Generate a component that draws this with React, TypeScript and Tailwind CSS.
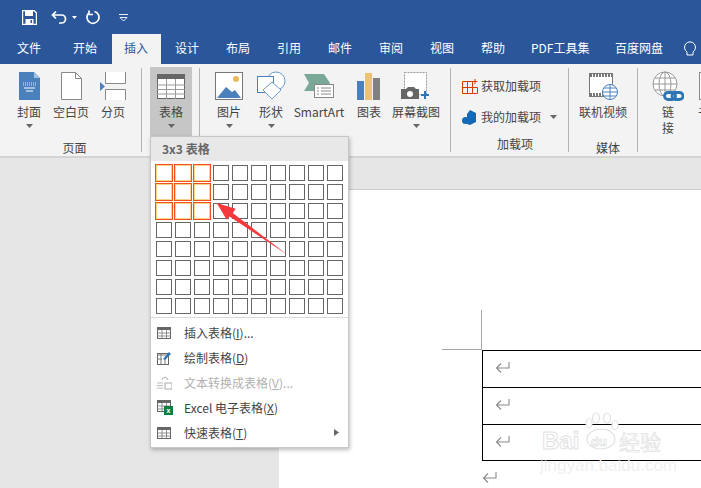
import type { ReactNode } from "react"

const cjk = { fontFamily: '"Noto Sans CJK SC", "Noto Sans", sans-serif' }

const tabs = [
  { label: "文件", w: "w-[58px]", pl: "pl-[17px]" },
  { label: "开始", w: "w-[54px]", pl: "pl-[15px]" },
  { label: "插入", w: "w-[49px]", pl: "pl-[12px]", active: true },
  { label: "设计", w: "w-[51px]", pl: "pl-[14px]" },
  { label: "布局", w: "w-[51px]", pl: "pl-[14px]" },
  { label: "引用", w: "w-[51px]", pl: "pl-[14px]" },
  { label: "邮件", w: "w-[51px]", pl: "pl-[14px]" },
  { label: "审阅", w: "w-[51px]", pl: "pl-[14px]" },
  { label: "视图", w: "w-[51px]", pl: "pl-[14px]" },
  { label: "帮助", w: "w-[51px]", pl: "pl-[14px]" },
  { label: "PDF工具集", w: "w-[85px]", pl: "pl-[13px]" },
  { label: "百度网盘", w: "w-[78px]", pl: "pl-[12px]" },
]

function Caret({ className = "" }: { className?: string }) {
  return (
    <svg width="7" height="4" viewBox="0 0 7 4" className={className}>
      <path d="M0 0h7L3.500 4z" fill="#666" />
    </svg>
  )
}

function RibbonButton({ w, icon, label, caret, active }: { w: string; icon: ReactNode; label: ReactNode; caret?: boolean; active?: boolean }) {
  return (
    <div className={`${w} flex shrink-0 flex-col items-center ${active ? "-mt-[1px] h-[71px] bg-[#c6c6c6] pt-[1px]" : "h-[70px]"}`}>
      <div className="mt-[3px] flex h-[30px] items-center justify-center">{icon}</div>
      <div className="mt-[3px] text-center text-[12px] leading-[16px] whitespace-nowrap text-[#444]">{label}</div>
      {caret && <Caret className="mt-[4px]" />}
    </div>
  )
}

function Group({ w, pl, label, children }: { w: string; pl: string; label?: string; children: ReactNode }) {
  return (
    <div className={`${w} flex h-full shrink-0 flex-col border-r border-[#b4b4b4] ${pl}`}>
      <div className="flex h-[70px]">{children}</div>
      <div className="mt-[2px] text-center text-[12px] leading-[16px] text-[#444]">{label}</div>
    </div>
  )
}

function TableIcon({ size = 14 }: { size?: number }) {
  return (
    <svg width={size} height={(size * 12) / 14} viewBox="0 0 14 12">
      <rect x="0.500" y="0.500" width="13" height="11" fill="#fff" stroke="#666" />
      <rect x="0" y="0" width="14" height="3" fill="#666" />
      <path d="M0.500 6h13M0.500 9h13M5 3v8M9.500 3v8" stroke="#777" strokeWidth="0.800" />
    </svg>
  )
}

function MenuItem({ icon, children, disabled, arrow }: { icon: ReactNode; children: ReactNode; disabled?: boolean; arrow?: boolean }) {
  return (
    <div className={`flex h-[25px] items-center text-[12px] ${disabled ? "text-[#b1b1b1]" : "text-[#444]"}`}>
      <div className="flex w-[33px] justify-start pl-[6px]">{icon}</div>
      <span>{children}</span>
      {arrow && (
        <svg width="5" height="7" viewBox="0 0 5 7" className="mr-[9px] ml-auto">
          <path d="M0 0l5 3.500L0 7z" fill="#666" />
        </svg>
      )}
    </div>
  )
}

function Key({ k }: { k: string }) {
  return (
    <>
      (<span className="underline">{k}</span>)
    </>
  )
}

function ReturnMark() {
  return (
    <svg width="15" height="13" viewBox="0 0 15 13">
      <path d="M14 1v6H1.500M6 2.500L1.500 7 6 11.500" fill="none" stroke="#8a8a8a" strokeWidth="1.100" />
    </svg>
  )
}

export default function App() {
  const cells = Array.from({ length: 80 }, (_, i) => i)

  return (
    <div className="relative flex h-[488px] w-[701px] flex-col overflow-hidden bg-[#e6e6e6]" style={cjk}>
      {/* title bar */}
      <div className="flex h-[34px] shrink-0 items-center bg-[#2b579a] pt-[1px] pl-[22px]">
        <svg width="15" height="15" viewBox="0 0 15 15">
          <path d="M0.500 0.500h11.500l2.500 2.500v11.500H0.500z" fill="none" stroke="#fff" strokeWidth="1.400" />
          <rect x="3" y="1" width="8" height="5" fill="#fff" />
          <rect x="3.500" y="9" width="8" height="5" fill="#fff" />
          <rect x="8.500" y="10" width="1.500" height="3" fill="#2b579a" />
        </svg>
        <svg width="17" height="15" viewBox="0 0 17 15" className="ml-[14px]">
          <path d="M5 1.500L1.500 5 5 8.500M2 5h8.500a4 4 0 0 1 0 8H8" fill="none" stroke="#fff" strokeWidth="1.700" />
        </svg>
        <svg width="5" height="3" viewBox="0 0 5 3" className="ml-[4px]">
          <path d="M0 0h5L2.500 3z" fill="#fff" />
        </svg>
        <svg width="15" height="15" viewBox="0 0 15 15" className="ml-[8px]">
          <path d="M9.500 1.500a6 6 0 1 1-6 1.800M4 0.500v4h4" fill="none" stroke="#fff" strokeWidth="1.700" />
        </svg>
        <svg width="9" height="8" viewBox="0 0 9 8" className="ml-[19px]">
          <path d="M0 0.500h9M1 3.500h7L4.500 7z" fill="none" stroke="#fff" strokeWidth="0.900" />
        </svg>
      </div>

      {/* tabs */}
      <div className="flex h-[30px] shrink-0 items-center bg-[#2b579a] text-[12px] text-white">
        {tabs.map((t) => (
          <div key={t.label} className={`${t.w} ${t.pl} flex h-full items-center pb-[2px] ${t.active ? "bg-[#f3f3f3] text-[#2b579a]" : ""}`}>
            {t.label}
          </div>
        ))}
        <svg width="13" height="17" viewBox="0 0 13 17" className="mb-[2px] ml-[2px]">
          <path d="M4 12a5.500 5.500 0 1 1 6 0v3H4z" fill="none" stroke="#fff" />
        </svg>
      </div>

      {/* ribbon */}
      <div className="flex h-[94px] shrink-0 overflow-hidden border-b-2 border-[#d4d4d4] bg-[#f3f3f3] py-[4px]">
        <Group w="w-[142px]" pl="pl-[8px]" label="页面">
          <RibbonButton
            w="w-[42px]"
            label="封面"
            caret
            icon={
              <svg width="21" height="28" viewBox="0 0 21 28">
                <path d="M0 0h15l6 6v22H0z" fill="#4a80bb" />
                <path d="M15 0l6 6h-6z" fill="#a5c3e0" />
                <path d="M4 11h13M4 13h13" stroke="#dfe9f4" strokeDasharray="1 1" />
                <path d="M5 16h11M7 19h7" stroke="#fff" />
              </svg>
            }
          />
          <RibbonButton
            w="w-[42px]"
            label="空白页"
            icon={
              <svg width="21" height="28" viewBox="0 0 21 28">
                <path d="M0.500 0.500h14l6 6v21H0.500z" fill="#fff" stroke="#888" />
                <path d="M14.500 0.500v6h6" fill="none" stroke="#888" />
              </svg>
            }
          />
          <RibbonButton
            w="w-[42px]"
            label="分页"
            icon={
              <svg width="26" height="28" viewBox="0 0 26 28">
                <path d="M5.500 0v11.500h20V0M5.500 28V17.500h20V28" fill="#fff" stroke="#888" />
                <path d="M0 10l5 4.500L0 19z" fill="#4a80bb" />
              </svg>
            }
          />
        </Group>

        <Group w="w-[58px]" pl="pl-[8px]">
          <RibbonButton
            w="w-[42px]"
            label="表格"
            caret
            active
            icon={
              <svg width="28" height="25" viewBox="0 0 28 25">
                <rect x="0.500" y="0.500" width="27" height="24" fill="#fff" stroke="#666" />
                <rect width="28" height="5" fill="#666" />
                <path d="M0 11h28M0 15.500h28M0 20h28M9.500 5v20M18.500 5v20" stroke="#999" />
              </svg>
            }
          />
        </Group>

        <Group w="w-[251px]" pl="pl-[8px]">
          <RibbonButton
            w="w-[42px]"
            label="图片"
            caret
            icon={
              <svg width="28" height="28" viewBox="0 0 28 28">
                <rect x="0.500" y="0.500" width="27" height="27" fill="#fff" stroke="#777" />
                <circle cx="21" cy="7" r="3" fill="#eab95e" />
                <path d="M2 26l9-11 6 5 3-2 6 8z" fill="#4a80bb" />
              </svg>
            }
          />
          <RibbonButton
            w="w-[42px]"
            label="形状"
            caret
            icon={
              <svg width="30" height="30" viewBox="0 0 30 30">
                <circle cx="20" cy="10" r="9" fill="#fff" stroke="#6a9bcc" />
                <rect x="1.500" y="5.500" width="16" height="16" fill="#fff" stroke="#4a80bb" />
                <path d="M16 11l9 8-9 9-9-9z" fill="#fff" stroke="#6a9bcc" />
              </svg>
            }
          />
          <RibbonButton
            w="w-[54px]"
            label="SmartArt"
            icon={
              <svg width="30" height="24" viewBox="0 0 30 24">
                <path d="M0 0h20l6 9-6 8H0l5-8z" fill="#7aa896" />
                <rect x="10.500" y="10.500" width="19" height="13" fill="#fff" stroke="#888" />
                <path d="M13 14h2M17 14h10M13 17h2M17 17h10M13 20h2M17 20h10" stroke="#888" />
              </svg>
            }
          />
          <RibbonButton
            w="w-[46px]"
            label="图表"
            icon={
              <svg width="24" height="27" viewBox="0 0 24 27">
                <rect x="0" y="8" width="7" height="19" fill="#4a80bb" />
                <rect x="8" y="0" width="7" height="27" fill="#eec178" />
                <rect x="16" y="5" width="7" height="22" fill="#808080" />
              </svg>
            }
          />
          <RibbonButton
            w="w-[48px]"
            label="屏幕截图"
            caret
            icon={
              <svg width="30" height="28" viewBox="0 0 30 28">
                <rect x="3.500" y="0.500" width="22" height="22" fill="#fff" stroke="#999" strokeDasharray="2 1" />
                <path d="M0 17h5l2-2h6l2 2h3v10H0z" fill="#666" />
                <circle cx="9" cy="22" r="3" fill="#fff" />
                <path d="M24 19v8M20 23h8" stroke="#2e75b6" strokeWidth="2" />
              </svg>
            }
          />
        </Group>

        <Group w="w-[118px]" pl="pl-[11px]" label="加载项">
          <div className="flex flex-col text-[12px] text-[#444]">
            <div className="mt-[8px] flex h-[20px] items-center gap-[3px]">
              <svg width="16" height="15" viewBox="0 0 16 15">
                <path d="M0.500 2.500h10v12H0.500zM0.500 8.500h15v6h-5M5.500 2.500v12M13 0v5M10.500 2.500h5" fill="none" stroke="#d83b01" />
              </svg>
              获取加载项
            </div>
            <div className="mt-[11px] flex h-[20px] items-center gap-[3px]">
              <svg width="15" height="15" viewBox="0 0 15 15" className="mr-[1px]">
                <path d="M8 0l6 3v9l-6 3-3-1V4z" fill="#1269b8" />
                <circle cx="3.500" cy="10.500" r="3.500" fill="#1269b8" />
              </svg>
              <span>我的加载项</span>
              <Caret className="ml-[6px]" />
            </div>
          </div>
        </Group>

        <Group w="w-[69px]" pl="pl-[10px]" label="媒体">
          <RibbonButton
            w="w-[48px]"
            label="联机视频"
            icon={
              <svg width="29" height="27" viewBox="0 0 29 27">
                <rect x="0.500" y="0.500" width="23" height="23" fill="#fff" stroke="#777" />
                <path d="M1 2.500h22M1 21.500h22" stroke="#777" strokeWidth="3" strokeDasharray="2 1" />
                <circle cx="21" cy="19" r="7.500" fill="#fff" stroke="#4a80bb" />
                <path d="M13.500 19h15M21 11.500v15M15 15h12M15 23h12" stroke="#4a80bb" />
              </svg>
            }
          />
        </Group>

        <div className="flex pl-[9px]">
          <RibbonButton
            w="w-[42px]"
            label={
              <>
                链
                <br />接
              </>
            }
            icon={
              <svg width="32" height="31" viewBox="0 0 32 31">
                <circle cx="13" cy="13" r="12" fill="#fff" stroke="#999" />
                <path d="M1 13h24M13 1v24M3 7h20M3 19h20" stroke="#999" />
                <ellipse cx="13" cy="13" rx="6" ry="12" fill="none" stroke="#999" />
                <rect x="12.500" y="21.500" width="11" height="7" rx="3.500" fill="#f3f3f3" stroke="#2e75b6" strokeWidth="2.800" />
                <rect x="20" y="21.500" width="11" height="7" rx="3.500" fill="none" stroke="#2e75b6" strokeWidth="2.800" />
              </svg>
            }
          />
          <RibbonButton
            w="w-[42px]"
            label="书签"
            icon={
              <svg width="22" height="28" viewBox="0 0 22 28">
                <rect x="0.500" y="0.500" width="21" height="27" fill="#fff" stroke="#888" />
              </svg>
            }
          />
        </div>
      </div>

      {/* document canvas */}
      <div className="flex-1 pt-[31px] pl-[279px]">
        <div className="h-full border-t border-[#cdcdcd] bg-white pt-[160px] pl-[203px]">
          <div className="relative">
            <div className="absolute top-[-40px] left-[-1px] h-[40px] w-px bg-[#a6a6a6]" />
            <div className="absolute top-[-1px] left-[-40px] h-px w-[40px] bg-[#a6a6a6]" />
            {[0, 1, 2].map((r) => (
              <div key={r} className={`flex h-[37px] items-center border-t border-l border-black pb-[3px] pl-[12px] ${r === 2 ? "border-b" : ""}`}>
                <ReturnMark />
              </div>
            ))}
            <div className="mt-[10px]">
              <ReturnMark />
            </div>

            {/* baidu watermark */}
            <div className="absolute top-[66px] left-[58px] flex w-[126px] flex-col">
              <svg width="40" height="38" viewBox="0 0 40 38" className="absolute top-[-4px] left-[42px]">
                <g fill="#fff" stroke="#e2e2e2" strokeWidth="1.200">
                  <ellipse cx="7" cy="11" rx="3" ry="4.500" />
                  <ellipse cx="14" cy="6" rx="3.500" ry="5" />
                  <ellipse cx="25" cy="6" rx="3.500" ry="5" />
                  <ellipse cx="33" cy="13" rx="3" ry="4.500" />
                  <ellipse cx="19" cy="27" rx="14" ry="10" />
                </g>
              </svg>
              <div className="relative mt-[15px] flex h-[20px] items-center leading-none text-white">
                <span className="w-[43px] pl-[2px] text-[24px] font-bold [-webkit-text-stroke:1px_#e2e2e2]" style={{ fontFamily: '"Liberation Sans", sans-serif' }}>Bai</span>
                <span className="w-[34px] pl-[8px] text-[13px] font-bold [-webkit-text-stroke:0.700px_#dcdcdc]" style={{ fontFamily: '"Liberation Sans", sans-serif' }}>du</span>
                <span className="ml-[2px] text-[21px] whitespace-nowrap [-webkit-text-stroke:0.700px_#e0e0e0]">经验</span>
              </div>
              <div className="mt-[7px] text-[17px] leading-[16px] whitespace-nowrap text-[#f0f0f0]" style={{ fontFamily: '"Liberation Sans", sans-serif' }}>jingyan.baidu.com</div>
            </div>
          </div>
        </div>
      </div>

      {/* table dropdown */}
      <div className="absolute top-[136px] left-[150px] w-[199px] border border-[#c6c6c6] bg-white shadow-[1px_2px_4px_rgba(0,0,0,0.25)]">
        <div className="flex h-[24px] items-center bg-[#e8e8e8] pl-[11px] text-[12px] font-bold text-[#666]">3x3 表格</div>
        <div className="grid grid-cols-[repeat(10,19px)] grid-rows-[repeat(8,19px)] pt-[2px] pl-[3px]">
          {cells.map((i) => {
            const selected = i % 10 < 3 && i < 30
            return (
              <div key={i} className="flex items-center justify-center">
                {selected ? (
                  <div className="h-[18px] w-[18px] border border-[#f0501e] bg-white shadow-[inset_0_0_0_1px_#fbd38a]" />
                ) : (
                  <div className="h-[16px] w-[16px] border border-[#666] bg-white" />
                )}
              </div>
            )
          })}
        </div>
        <div className="mt-[2px] border-t border-[#d8d8d8]" />
        <div className="pt-[2px] pb-[2px]">
          <MenuItem icon={<TableIcon />}>
            插入表格
            <Key k="I" />
            ...
          </MenuItem>
          <MenuItem
            icon={
              <svg width="15" height="15" viewBox="0 0 15 15">
                <rect x="0.500" y="3.500" width="11" height="11" fill="#fff" stroke="#666" />
                <path d="M0 5h12M4 4v10M8 9v5M0 9h5" stroke="#777" />
                <path d="M6 9l6-7 2 2-6 6z" fill="#2e75b6" />
              </svg>
            }
          >
            绘制表格
            <Key k="D" />
          </MenuItem>
          <MenuItem
            disabled
            icon={
              <svg width="15" height="15" viewBox="0 0 15 15">
                <path d="M0 8h6M0 10.500h6M0 13h6" stroke="#bbb" />
                <rect x="8" y="8" width="7" height="6" fill="#fff" stroke="#aaa" />
                <path d="M5 5a3 3 0 0 1 5-2l1 2" fill="none" stroke="#aaa" />
              </svg>
            }
          >
            文本转换成表格
            <Key k="V" />
            ...
          </MenuItem>
          <MenuItem
            icon={
              <span className="relative flex h-[15px] w-[16px]">
                <TableIcon />
                <span className="absolute right-0 bottom-0 flex h-[9px] w-[9px] items-center justify-center bg-[#107c41] text-[7px] leading-none font-bold text-white">x</span>
              </span>
            }
          >
            Excel 电子表格
            <Key k="X" />
          </MenuItem>
          <MenuItem icon={<TableIcon />} arrow>
            快速表格
            <Key k="T" />
          </MenuItem>
        </div>
      </div>

      {/* red annotation arrow */}
      <svg width="80" height="60" viewBox="0 0 80 60" className="absolute top-[200px] left-[212px]">
        <path d="M4.700 3L23.700 8.700 20.700 13 75.300 54.700 17.500 16.500 14.700 19.700z" fill="#f5383c" />
      </svg>
    </div>
  )
}
